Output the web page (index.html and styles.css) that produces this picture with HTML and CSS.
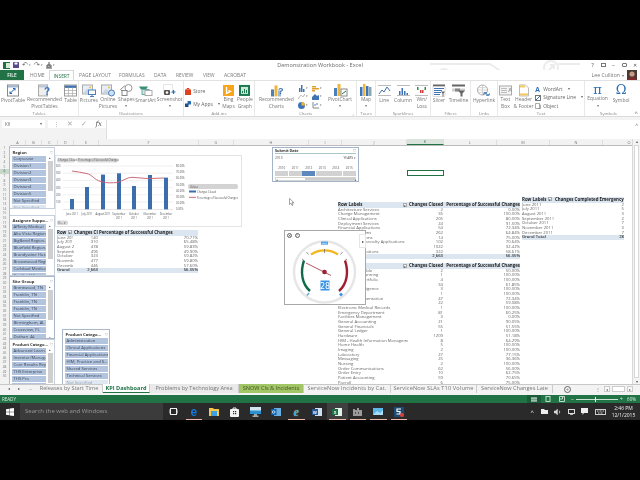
FILE: index.html
```html
<!DOCTYPE html>
<html lang="en">
<head>
<meta charset="utf-8">
<title>Demonstration Workbook - Excel</title>
<link rel="stylesheet" href="styles.css">
</head>
<body>
<div class="app">

<header class="titlebar">
  <svg class="circuit" width="150" height="28" viewBox="0 0 150 28"><g fill="none" stroke="#ececec" stroke-width="2"><path d="M0 4H60L72 12H110"/><circle cx="14" cy="15" r="6"/><path d="M14 15h-4m4 0v-4"/><path d="M30 12H70M60 20H96"/><circle cx="121" cy="8" r="7"/><path d="M118 11l6-6m-4 0h4v4"/><path d="M128 4h22"/></g></svg>
  <div class="qat">
    <svg width="7" height="7" viewBox="0 0 7 7"><rect width="7" height="7" fill="#1e7145"/><rect x="3" y="1" width="4" height="5" fill="#d9ead3"/></svg>
    <svg width="6" height="6" viewBox="0 0 6 6"><rect width="6" height="6" rx=".6" fill="#5b4a8a"/><rect x="1.5" y=".5" width="3" height="2" fill="#fff"/></svg>
    <span class="qat-g">↶</span><span class="qat-d">▾</span><span class="qat-g">↷</span><span class="qat-d">▾</span>
    <svg width="6" height="7" viewBox="0 0 6 7"><path d="M3 0v4M1 3h4v2H1zM0 6h6" stroke="#555" fill="none"/></svg><span class="qat-d">▾</span>
  </div>
  <div class="doc-title">Demonstration Workbook - Excel</div>
  <div class="winctl"><span>?</span><span class="ctl-box"></span><span>–</span><span class="ctl-box ctl-box2"></span><span class="ctl-x">✕</span></div>
</header>

<nav class="tabs">
  <span class="tab tab-file">FILE</span>
  <span class="tab">HOME</span>
  <span class="tab tab-on">INSERT</span>
  <span class="tab">PAGE LAYOUT</span>
  <span class="tab">FORMULAS</span>
  <span class="tab">DATA</span>
  <span class="tab">REVIEW</span>
  <span class="tab">VIEW</span>
  <span class="tab">ACROBAT</span>
  <div class="user"><span>Lee Culliton</span><span class="user-d">▾</span>
    <svg width="10" height="10" viewBox="0 0 10 10"><rect width="10" height="10" fill="#4a3a34"/><circle cx="5" cy="4" r="2.6" fill="#c99a86"/><path d="M0 10c1-4 9-4 10 0z" fill="#7d2d2d"/></svg></div>
</nav>

<section class="ribbon">
  <div class="grp g-tables"><div class="grp-body">
    <div class="btn"><svg class="ic" width="12" height="12" viewBox="0 0 12 12"><rect x=".5" y=".5" width="11" height="11" fill="#fff" stroke="#8a8a8a"/><path d="M1 1h10v2H1z" fill="#9db7d8"/><path d="M3 9l5-5M8 4H6m2 0v2M3 9h2M3 9V7" stroke="#1e5aa8" fill="none"/></svg><span>PivotTable</span></div>
    <div class="btn"><svg class="ic" width="13" height="12" viewBox="0 0 13 12"><rect x=".5" y=".5" width="9" height="11" fill="#eee" stroke="#aaa"/><path d="M1 1h8v2H1z" fill="#b9c7d8"/><text x="6" y="11" class="ic-q">?</text></svg><span>Recommended<br>PivotTables</span></div>
    <div class="btn"><svg class="ic" width="13" height="12" viewBox="0 0 13 12"><rect x=".5" y=".5" width="12" height="11" fill="#fff" stroke="#999"/><path d="M1 1h11v2.400H1z" fill="#3f73b5"/><path d="M4.500 3v9M8.500 3v9M1 6h11M1 9h11" stroke="#aaa" stroke-width=".7"/></svg><span>Table</span></div>
  </div><div class="grp-name">Tables</div></div>

  <div class="grp g-illus"><div class="grp-body">
    <div class="btn"><svg class="ic" width="14" height="12" viewBox="0 0 14 12"><rect x=".5" y=".5" width="10" height="9" fill="#e8eef6" stroke="#aaa"/><path d="M1 9l4-5 4 5z" fill="#c8d4e4"/><circle cx="8" cy="3" r="1" fill="#f1c232"/><rect x="6.500" y="5.500" width="7" height="4.500" fill="#fff" stroke="#4a80bd"/><path d="M10 10v2M8 12h4" stroke="#4a80bd"/></svg><span>Pictures</span></div>
    <div class="btn"><svg class="ic" width="14" height="12" viewBox="0 0 14 12"><rect x=".5" y=".5" width="10" height="9" fill="#e8eef6" stroke="#aaa"/><path d="M1 9l4-5 4 5z" fill="#c8d4e4"/><circle cx="8" cy="3" r="1" fill="#f1c232"/><circle cx="10.500" cy="8.500" r="3" fill="#cfe0f2" stroke="#4a80bd"/></svg><span>Online<br>Pictures</span></div>
    <div class="btn"><svg class="ic" width="13" height="12" viewBox="0 0 13 12"><path d="M4.500 2l4 3.500-4 3.500-4-3.500z" fill="#fff" stroke="#888"/><circle cx="8.500" cy="4" r="3.500" fill="#fff" stroke="#999"/><rect x="2" y="6.500" width="5" height="5" fill="#fff" stroke="#888"/></svg><span>Shapes<br><i>▾</i></span></div>
    <div class="btn"><svg class="ic" width="13" height="12" viewBox="0 0 13 12"><path d="M0 2h9l-2 3H2z" fill="#3b8e76"/><rect x="3" y="5" width="7" height="5" fill="#cfe7df" stroke="#6aa"/><rect x="6" y="6" width="7" height="5" fill="#fff" stroke="#aaa"/></svg><span>SmartArt</span></div>
    <div class="btn"><svg class="ic" width="13" height="12" viewBox="0 0 13 12"><rect x=".5" y=".5" width="9" height="8" fill="#fff" stroke="#ccc" stroke-dasharray="1 1"/><rect x="1" y="6" width="6" height="5" rx="1" fill="#555"/><circle cx="4" cy="8.500" r="1.300" fill="#fff"/><path d="M10.500 6v4M8.500 8h4" stroke="#2a6fb5" stroke-width="1.200"/></svg><span>Screenshot<br><i>▾</i></span></div>
  </div><div class="grp-name">Illustrations</div></div>

  <div class="grp g-addins"><div class="grp-body">
    <div class="addin-list">
      <div class="addin"><svg width="6" height="7" viewBox="0 0 6 7"><rect y="1.500" width="6" height="5.500" fill="#e2401e"/><path d="M2 2V.5h2V2" stroke="#e2401e" fill="none"/></svg><span>Store</span></div>
      <div class="addin"><svg width="6" height="6" viewBox="0 0 6 6"><rect x="2.500" width="3.500" height="3.500" fill="#2a6fb5"/><rect y="2.500" width="3.500" height="3.500" fill="#1d4f8a"/></svg><span>My Apps</span><i>▾</i></div>
    </div>
    <div class="btn"><svg class="ic" width="11" height="11" viewBox="0 0 11 11"><rect width="11" height="11" fill="#f9a51a"/><path d="M3.500 2v6.500l4-2-2-1" stroke="#fff" stroke-width="1.300" fill="none"/></svg><span>Bing<br>Maps</span></div>
    <div class="btn"><svg class="ic" width="11" height="11" viewBox="0 0 11 11"><rect width="11" height="11" fill="#1d7a50"/><rect x="2" y="2" width="7" height="7" fill="#cde6da"/><path d="M3.500 8V6M5.500 8V4M7.500 8V5" stroke="#1d7a50"/></svg><span>People<br>Graph</span></div>
  </div><div class="grp-name">Add-ins</div></div>

  <div class="grp g-charts"><div class="grp-body">
    <div class="btn"><svg class="ic" width="13" height="12" viewBox="0 0 13 12"><rect x="1" y="5" width="3" height="7" fill="#4a80bd"/><rect x="4.500" y="1" width="3" height="11" fill="#f0b63a"/><rect x="8" y="6" width="3" height="6" fill="#9db7d8"/><text x="8" y="10" class="ic-q2">?</text></svg><span>Recommended<br>Charts</span></div>
    <div class="chart-mini">
      <div><svg width="7" height="7" viewBox="0 0 7 7"><path d="M1 7V3h1.500v4zM3 7V0h1.500v7zM5 7V4h1.500v3z" fill="#3f73b5"/></svg><i>▾</i><svg width="7" height="7" viewBox="0 0 7 7"><path d="M0 1h4v1.500H0zM0 3h7v1.500H0zM0 5h3v1.500H0z" fill="#e0a030"/></svg><i>▾</i></div>
      <div><svg width="7" height="7" viewBox="0 0 7 7"><path d="M0 6l3-4 2 2 2-3" stroke="#999" fill="none" stroke-dasharray="1 .5"/></svg><i>▾</i><svg width="7" height="7" viewBox="0 0 7 7"><path d="M0 7V4l3-3 2 2 2-1v5z" fill="#3f73b5"/></svg><i>▾</i></div>
      <div><svg width="7" height="7" viewBox="0 0 7 7"><circle cx="3.500" cy="3.500" r="3.500" fill="#3f73b5"/><path d="M3.500 3.500V0A3.500 3.500 0 0 1 7 3.500z" fill="#f0b63a"/></svg><i>▾</i><svg width="7" height="7" viewBox="0 0 7 7"><path d="M1 0v6h6" stroke="#888" fill="none"/><circle cx="3" cy="3" r=".8" fill="#3f73b5"/><circle cx="5" cy="2" r=".8" fill="#3f73b5"/></svg><i>▾</i></div>
    </div>
    <div class="btn"><svg class="ic" width="13" height="12" viewBox="0 0 13 12"><rect x="0" y="4" width="3" height="8" fill="#4a80bd"/><rect x="3.500" y="0" width="3" height="12" fill="#f0b63a"/><rect x="7" y="5" width="6" height="7" fill="#fff" stroke="#888"/><path d="M8 10l4-3" stroke="#1d7a50"/></svg><span>PivotChart<br><i>▾</i></span></div>
  </div><div class="grp-name">Charts<em class="launcher">⌟</em></div></div>

  <div class="grp g-tours"><div class="grp-body">
    <div class="btn"><svg class="ic" width="12" height="12" viewBox="0 0 12 12"><rect x="0" y="3" width="2.500" height="9" fill="#3f73b5"/><rect x="3" y="0" width="2.500" height="12" fill="#f0b63a"/><rect x="6" y="2" width="2.500" height="10" fill="#3f73b5"/><rect x="9" y="3" width="2.500" height="9" fill="#8aa"/></svg><span>Map<br><i>▾</i></span></div>
  </div><div class="grp-name">Tours</div></div>

  <div class="grp g-spark"><div class="grp-body">
    <div class="btn"><svg class="ic" width="13" height="11" viewBox="0 0 13 11"><path d="M0 .5h13M0 10.500h13" stroke="#bbb"/><path d="M1 9l3-4 2 2 3-5 3 4" stroke="#3f73b5" fill="none"/></svg><span>Line</span></div>
    <div class="btn"><svg class="ic" width="13" height="11" viewBox="0 0 13 11"><path d="M0 .5h13M0 10.500h13" stroke="#bbb"/><path d="M2 10V6h1.500v4zM4.500 10V3H6v7zM7 10V6h1.500v4zM9.500 10V8H11v2z" fill="#3f73b5"/></svg><span>Column</span></div>
    <div class="btn"><svg class="ic" width="13" height="11" viewBox="0 0 13 11"><path d="M0 .5h13M0 10.500h13" stroke="#bbb"/><path d="M2 2h1.500v3H2zM9.500 2H11v3H9.500z" fill="#2d8a50"/><path d="M5 5h1.500v3H5zM7 5h1.500v3H7z" fill="#d43b3b"/></svg><span>Win/<br>Loss</span></div>
  </div><div class="grp-name">Sparklines</div></div>

  <div class="grp g-filters"><div class="grp-body">
    <div class="btn"><svg class="ic" width="12" height="12" viewBox="0 0 12 12"><rect width="12" height="2" fill="#666"/><rect y="2" width="12" height="10" fill="#fff" stroke="#bbb" stroke-width=".5"/><path d="M1 4h10M1 6h8M1 8h7M1 10h6" stroke="#3f73b5" stroke-width="1.200"/><path d="M8 7h4l-1.500 2v3h-1V9z" fill="#666"/></svg><span>Slicer</span></div>
    <div class="btn"><svg class="ic" width="13" height="12" viewBox="0 0 13 12"><rect width="13" height="2" fill="#666"/><path d="M0 4h13v3H0z" fill="#cfcfcf"/><path d="M3 4h5v3H3z" fill="#888"/><path d="M6 6h7l-2.500 3v3h-2V9z" fill="#666"/></svg><span>Timeline</span></div>
  </div><div class="grp-name">Filters</div></div>

  <div class="grp g-links"><div class="grp-body">
    <div class="btn"><svg class="ic" width="13" height="12" viewBox="0 0 13 12"><circle cx="5.500" cy="5.500" r="5" fill="#fff" stroke="#aaa"/><path d="M.5 5.500h10M5.500.5v10M2 2.500c2 1 5 1 7 0M2 8.500c2-1 5-1 7 0" stroke="#bbb" stroke-width=".6" fill="none"/><path d="M7 8.500h3M9 10.500h3.500M6.500 10c0-2 2-1.500 3-1.500M12.500 9c0 2-2 1.500-3 1.500" stroke="#2a6fb5" fill="none"/></svg><span>Hyperlink</span></div>
  </div><div class="grp-name">Links</div></div>

  <div class="grp g-text"><div class="grp-body">
    <div class="btn"><svg class="ic" width="13" height="12" viewBox="0 0 13 12"><rect x=".5" y="1.500" width="12" height="9" fill="#f4f4f4" stroke="#aaa"/><path d="M2 4h6M2 6h6M2 8h6" stroke="#bbb"/><text x="9" y="8" class="ic-a">A</text></svg><span>Text<br>Box</span></div>
    <div class="btn"><svg class="ic" width="10" height="12" viewBox="0 0 10 12"><path d="M.5.500h6l3 3v8h-9z" fill="#fff" stroke="#bbb"/><path d="M1 1h5v2H1z" fill="#f4c95d"/><path d="M1 9h8v2H1z" fill="#f4c95d"/></svg><span>Header<br>&amp; Footer</span></div>
    <div class="text-list">
      <div><svg width="6" height="6" viewBox="0 0 6 6"><text x="0" y="6" class="ic-wa">A</text></svg><span>WordArt</span><i>▾</i></div>
      <div><svg width="6" height="6" viewBox="0 0 6 6"><rect x=".5" y=".5" width="5" height="5" fill="#fff" stroke="#777"/><path d="M1 5l4-4" stroke="#2a6fb5"/></svg><span>Signature Line</span><i>▾</i></div>
      <div><svg width="6" height="6" viewBox="0 0 6 6"><path d="M.5.500h4v5h-4zM4.500 2h1v3.500h-2" fill="#fff" stroke="#888" stroke-width=".7"/></svg><span>Object</span></div>
    </div>
  </div><div class="grp-name">Text</div></div>

  <div class="grp g-sym"><div class="grp-body">
    <div class="btn"><span class="glyph">π</span><span>Equation<br><i>▾</i></span></div>
    <div class="btn"><span class="glyph">Ω</span><span>Symbol</span></div>
  </div><div class="grp-name">Symbols</div></div>
  <div class="collapse">^</div>
</section>

<section class="fbar">
  <div class="namebox"><span>K6</span><i>▾</i></div>
  <div class="fbtns"><span class="fb-dots">⋮</span><span>✕</span><span>✓</span><span class="fb-fx">fx</span></div>
  <div class="fbox"><span class="fb-up">^</span></div>
</section>

<section class="sheetwrap">
  <div class="sheet">
    <div class="corner"></div>
    <div class="cols">
      <span class="c1">A</span><span class="c1">B</span><span class="c1">C</span><span class="c1">D</span><span class="c2">E</span><span class="c3">F</span><span class="c4">G</span><span class="c5">H</span><span class="c6">I</span><span class="c9">J</span><span class="c7 col-on">K</span><span class="c8">L</span><span class="c8">M</span><span class="c8">N</span><span class="c8">O</span>
    </div>
    <div class="rows">
      <span>1</span><span>2</span><span>3</span><span>4</span><span>5</span><span class="row-on">6</span><span>7</span><span>8</span><span>9</span><span>10</span><span>11</span><span>12</span><span>13</span><span>14</span><span>15</span><span>16</span><span>17</span><span>18</span><span>19</span><span>20</span><span>21</span><span>22</span><span>23</span><span>24</span><span>25</span><span>26</span><span>27</span><span>28</span><span>29</span><span>30</span><span>31</span><span>32</span><span>33</span><span>34</span><span>35</span><span>36</span><span>37</span><span>38</span><span>39</span><span>40</span><span>41</span><span>42</span><span>43</span><span>44</span><span>45</span><span>46</span><span>47</span><span>48</span><span>49</span><span>50</span>
    </div>

    <div class="canvas">
      <div class="selcell"></div>

      <div class="slicer s-region">
        <div class="sl-head"><b>Region</b><span>⛉</span></div>
        <div class="sl-body"><div class="sl-items"><div>Corporate</div><div>Division1</div><div>Division2</div><div>Division3</div><div>Division4</div><div>Division5</div><div>Not Specified</div><div class="dim">Not Specified</div></div>
        <div class="sl-scroll"><i>▴</i><u></u><i>▾</i></div></div>
      </div>
      <div class="slicer s-assignee">
        <div class="sl-head"><b>Assignee Suppo...</b><span>⛉</span></div>
        <div class="sl-body"><div class="sl-items"><div>Affinity Medical</div><div>Alta Vista Region</div><div>BigBend Region...</div><div>Bluefield Region...</div><div>Brandywine Hos...</div><div>Brownwood Regi...</div><div>Carlsbad Medical</div><div>Cardinal Hinman</div></div>
        <div class="sl-scroll"><i>▴</i><u></u><i>▾</i></div></div>
      </div>
      <div class="slicer s-site">
        <div class="sl-head"><b>Site Group</b><span>⛉</span></div>
        <div class="sl-body"><div class="sl-items"><div>Brentwood, TN</div><div>Franklin, TN</div><div>Franklin, TN</div><div>Franklin, TN</div><div>Not Specified</div><div>Birmingham, AL</div><div>Crossview, FL</div><div>Dothan, AL</div></div>
        <div class="sl-scroll"><i>▴</i><u></u><i>▾</i></div></div>
      </div>
      <div class="slicer s-prod1">
        <div class="sl-head"><b>Product Catego...</b><span>⛉</span></div>
        <div class="sl-body"><div class="sl-items"><div>Advanced Learn...</div><div>Inventor/Manag...</div><div>Core Results Rep...</div><div>THS Enterprise</div><div>THS Pro</div><div>Clinical Control</div></div>
        <div class="sl-scroll"><i>▴</i><u></u><i>▾</i></div></div>
      </div>
      <div class="slicer s-prod2">
        <div class="sl-head"><b>Product Catego...</b><span>⛉</span></div>
        <div class="sl-items"><div>Administration</div><div>Clinical Applications</div><div>Financial Applications</div><div>HIM, Practice and S...</div><div>Shared Services</div><div>Technical Services</div><div class="dim">Not Specified</div></div>
      </div>

      <svg class="chart" width="187" height="72" viewBox="0 0 187 72">
        <rect x=".5" y=".5" width="186" height="71" fill="#fff" stroke="#e4e4e4"/>
        <g class="fieldbtn"><rect x="2" y="3" width="18" height="4.500" rx="1.500"/><rect x="22" y="3" width="41" height="4.500" rx="1.500"/><text x="3" y="6.300">Changes Closed</text><text x="23" y="6.300">Percentage of Successful Changes</text></g>
        <g stroke="#e6e6e6" stroke-width=".6"><path d="M8 11h110M8 18.200h110M8 25.400h110M8 32.600h110M8 39.800h110M8 47h110"/></g>
        <g class="axis"><text x="1" y="12">600</text><text x="1" y="19.200">500</text><text x="1" y="26.400">400</text><text x="1" y="33.600">300</text><text x="1" y="40.800">200</text><text x="1" y="48">100</text>
        <text x="121" y="12">80.00%</text><text x="121" y="18.200">70.00%</text><text x="121" y="24.400">60.00%</text><text x="121" y="30.600">50.00%</text><text x="121" y="36.800">40.00%</text><text x="121" y="43">30.00%</text><text x="121" y="49.200">20.00%</text><text x="121" y="55">0.00%</text></g>
        <g fill="#3b6eae"><rect x="15" y="44" width="4" height="10.500"/><rect x="30" y="32" width="4" height="22.500"/><rect x="46" y="19.600" width="4" height="35"/><rect x="62" y="18.300" width="4" height="36.200"/><rect x="77" y="31" width="4" height="23.500"/><rect x="93" y="20" width="4" height="34.500"/><rect x="109" y="22.600" width="4" height="32"/></g>
        <path d="M8 54.500h110" stroke="#ccc" stroke-width=".5"/>
        <path d="M17 16c5 .7 10 1.500 15 2.600s7 6 14 8 11 1 16 1c6-1.600 10-5.300 15-5.300l16 1.300 16-.6" fill="none" stroke="#c75b6d" stroke-width=".9"/>
        <g class="axis cats"><text x="17" y="59.500">June 2011</text><text x="32" y="59.500">July 2011</text><text x="48" y="59.500">August 2011</text><text x="64" y="59.500">September</text><text x="64" y="63.500">2011</text><text x="79" y="59.500">October</text><text x="79" y="63.500">2011</text><text x="95" y="59.500">November</text><text x="95" y="63.500">2011</text><text x="111" y="59.500">December</text><text x="111" y="63.500">2011</text></g>
        <rect x="133" y="29" width="50" height="5" rx="2" fill="#d3d3d3"/><text class="axis" x="135" y="32.600">Values</text>
        <rect x="134" y="35.500" width="7" height="2" fill="#3b6eae"/><text class="axis" x="142" y="38">Changes Closed</text>
        <rect x="134" y="41.800" width="7" height="1.200" fill="#d9808e"/><text class="axis" x="142" y="44">Percentage of Successful Changes</text>
        <rect x="2" y="65.500" width="11" height="4.500" rx="1.500" fill="#d9d9d9"/><text class="axis" x="3" y="69">Ye... ▾</text>
      </svg>

      <table class="pv p1">
        <tr class="hd"><th>Row <i class="fbtn">▾</i></th><th>Changes Cl</th><th>Percentage of Successful Changes</th></tr>
        <tr><td>June 20!</td><td>140</td><td>70.71%</td></tr>
        <tr><td>July 20!!</td><td>310</td><td>65.48%</td></tr>
        <tr><td>August 2</td><td>478</td><td>59.83%</td></tr>
        <tr><td>Septemb</td><td>496</td><td>49.90%</td></tr>
        <tr><td>October</td><td>323</td><td>59.82%</td></tr>
        <tr><td>Novemb</td><td>477</td><td>59.80%</td></tr>
        <tr><td>Decemb</td><td>446</td><td>57.60%</td></tr>
        <tr class="tot"><td>Grand</td><td>2,663</td><td>56.35%</td></tr>
      </table>

      <div class="timeline">
        <div class="tl-head"><b>Submit Date</b><span>⛉</span></div>
        <div class="tl-sub"><span>2013</span><span>YEARS ▾</span></div>
        <div class="tl-years"><span>2010</span><span>2011</span><span>2012</span><span>2013</span><span>2014</span><span>2015</span></div>
        <div class="tl-bars"><i></i><i></i><i class="on"></i><i></i><i></i><i></i></div>
        <div class="tl-scroll"><i>◂</i><u></u><i>▸</i></div>
      </div>

      <svg class="cursor" width="6" height="8" viewBox="0 0 6 8"><path d="M.5.500v6l1.500-1.300 1 2.300 1-.5-1-2.300h2z" fill="#fff" stroke="#666" stroke-width=".6"/></svg>

      <table class="pv p2">
        <tr class="hd"><th><i class="fbtn">▾</i>Row Labels</th><th>Changes Closed</th><th>Percentage of Successful Changes</th></tr>
        <tr><td>Architecture Services</td><td>2</td><td>0.00%</td></tr>
        <tr><td>Change Management</td><td>35</td><td>100.00%</td></tr>
        <tr><td>Clinical Applications</td><td>205</td><td>80.00%</td></tr>
        <tr><td>Deployment Services</td><td>24</td><td>91.50%</td></tr>
        <tr><td>Financial Applications</td><td>54</td><td>72.34%</td></tr>
        <tr><td>Hospital Systems</td><td>262</td><td>64.84%</td></tr>
        <tr><td>Interface Systems</td><td>14</td><td>75.00%</td></tr>
        <tr><td>Information Specialty Applications</td><td>102</td><td>70.64%</td></tr>
        <tr><td>Service Desks</td><td>1022</td><td>32.42%</td></tr>
        <tr><td>Telecommunications</td><td>322</td><td>58.61%</td></tr>
        <tr class="tot"><td>Grand Total</td><td>2,663</td><td>56.35%</td></tr>
      </table>

      <table class="pv p3">
        <tr class="hd"><th><i class="fbtn">▾</i>Row Labels</th><th>Changes Closed</th><th>Percentage of Successful Changes</th></tr>
        <tr><td>Accounts Payable</td><td>2</td><td>50.00%</td></tr>
        <tr><td>Admissions Planning</td><td>1</td><td>100.00%</td></tr>
        <tr><td>Blood Bank Portfolio</td><td>4</td><td>100.00%</td></tr>
        <tr><td>Clinical</td><td>34</td><td>61.85%</td></tr>
        <tr><td>Business Intelligence</td><td>3</td><td>100.00%</td></tr>
        <tr><td>Coding</td><td>1</td><td>100.00%</td></tr>
        <tr><td>Clinical Documentation</td><td>47</td><td>72.34%</td></tr>
        <tr><td>ED</td><td>22</td><td>59.08%</td></tr>
        <tr><td>Electronic Medical Records</td><td>1</td><td>100.00%</td></tr>
        <tr><td>Emergency Department</td><td>81</td><td>60.25%</td></tr>
        <tr><td>Facilities Management</td><td>3</td><td>0.00%</td></tr>
        <tr><td>General Accounting</td><td>21</td><td>90.05%</td></tr>
        <tr><td>General Financials</td><td>55</td><td>51.55%</td></tr>
        <tr><td>General Ledger</td><td>1</td><td>100.00%</td></tr>
        <tr><td>Hardware</td><td>1209</td><td>51.18%</td></tr>
        <tr><td>HIM - Health Information Management</td><td>8</td><td>64.29%</td></tr>
        <tr><td>Home Health</td><td>5</td><td>100.00%</td></tr>
        <tr><td>Imaging</td><td>2</td><td>100.00%</td></tr>
        <tr><td>Laboratory</td><td>27</td><td>77.15%</td></tr>
        <tr><td>Messaging</td><td>25</td><td>36.36%</td></tr>
        <tr><td>Nursing</td><td>2</td><td>100.00%</td></tr>
        <tr><td>Order Communications</td><td>62</td><td>56.00%</td></tr>
        <tr><td>Order Entry</td><td>10</td><td>62.75%</td></tr>
        <tr><td>Patient Accounting</td><td>59</td><td>70.65%</td></tr>
        <tr><td>Payroll</td><td>6</td><td>75.00%</td></tr>
      </table>

      <table class="pv p4">
        <tr class="hd"><th>Row Labels <i class="fbtn">▾</i></th><th>Changes Completed Emergency</th></tr>
        <tr><td>June 2011</td><td>2</td></tr>
        <tr><td>July 2011</td><td>5</td></tr>
        <tr><td>August 2011</td><td>3</td></tr>
        <tr><td>September 2011</td><td>2</td></tr>
        <tr><td>October 2011</td><td>7</td></tr>
        <tr><td>November 2011</td><td>3</td></tr>
        <tr><td>December 2011</td><td>7</td></tr>
        <tr class="tot"><td>Grand Total</td><td>28</td></tr>
      </table>

      <div class="gauge">
        <div class="g-btns"><i>✕</i><i>?</i></div>
        <div class="g-flap">▸</div>
        <svg class="g-dial" width="80" height="74" viewBox="0 0 80 74">
          <circle cx="39.500" cy="41" r="30.500" fill="#fff" stroke="#e6e6e6" stroke-width="2.500"/>
          <path d="M26 23.500C34 18 45 18 53 23.500" fill="none" stroke="#f2b61f" stroke-width="2.200"/>
          <path d="M19 29.500C15 41 17 53 25 60" fill="none" stroke="#0f6b47" stroke-width="2.400"/>
          <path d="M60 29.500C64 41 62 53 54 60" fill="none" stroke="#a11f2e" stroke-width="2.400"/>
          <path d="M39.500 18v4M21.500 21l2 2.500M57.500 21l-2 2.500M17 28l2 1.500M62 28l-2 1.500" stroke="#666" stroke-width=".7"/>
          <path d="M21 32L46 44.500" stroke="#9c2b45" stroke-width=".8"/>
          <circle cx="39.500" cy="41" r="2.300" fill="#9c2030"/>
          <rect x="36" y="10.500" width="7" height="3.200" fill="#58a4ea"/><text class="g-mini" x="39.500" y="13">50%</text>
          <rect x="35.500" y="49.500" width="9" height="10" fill="#3c94e6"/><text class="g-num" x="40" y="58">28</text>
          <path d="M24 62l-2 2.500" stroke="#58a4ea" stroke-width="1.400"/>
          <path d="M56 61.500l2 2 -2 2-2-2z" fill="#3c94e6"/>
        </svg>
      </div>
    </div>
  </div>
  <div class="vscroll"><i>▴</i><u></u><i>▾</i></div>
</section>

<nav class="sheettabs">
  <div class="st-nav"><span>◂</span><span>▸</span><span>…</span></div>
  <span class="st st-a">Releases by Start Time</span>
  <span class="st st-on">KPI Dashboard</span>
  <span class="st st-grey">Problems by Technology Area</span>
  <span class="st st-green">SNOW CIs &amp; Incidents</span>
  <span class="st st-b">ServiceNow Incidents by Cat.</span>
  <span class="st st-b">ServiceNow SLAs T10 Volume</span>
  <span class="st st-c">ServiceNow Changes Late</span>
  <span class="st-add">+</span>
  <div class="hscroll"><span class="st-dots">⋮</span><i>◂</i><u></u><i>▸</i></div>
</nav>

<footer class="status">
  <span class="ready">READY</span>
  <div class="views">
    <span class="v-on"><svg width="6" height="5" viewBox="0 0 6 5"><path d="M0 0h6v5H0zM0 1.700h6M0 3.300h6M2 0v5M4 0v5" fill="none" stroke="#e8f2ec" stroke-width=".6"/></svg></span>
    <span><svg width="6" height="6" viewBox="0 0 6 6"><rect x="1" y=".5" width="4" height="5" fill="none" stroke="#e8f2ec" stroke-width=".8"/></svg></span>
    <span><svg width="6" height="6" viewBox="0 0 6 6"><path d="M.5.500h5v5h-5zM.5 3h3V.5" fill="none" stroke="#e8f2ec" stroke-width=".8"/></svg></span>
  </div>
  <div class="zoom"><span>–</span><div class="ztrack"><i></i></div><span>+</span></div>
  <span class="zpct">60%</span>
</footer>

<footer class="taskbar">
  <svg class="start" width="8" height="8" viewBox="0 0 8 8"><path d="M0 1.200l3.400-.5v3.100H0zM3.800.6L8 0v3.800H3.800zM0 4.200h3.400v3.100L0 6.800zM3.800 4.200H8V8l-4.200-.6z" fill="#fff"/></svg>
  <div class="search">Search the web and Windows</div>
  <div class="tb-icons">
    <span class="ti"><svg width="9" height="7" viewBox="0 0 9 7"><rect x="1.500" y=".5" width="6" height="6" fill="none" stroke="#eee"/><path d="M0 1.500v4M9 1.500v4" stroke="#eee"/></svg></span>
    <span class="ti open"><span class="ti-e">e</span></span>
    <span class="ti"><svg width="10" height="9" viewBox="0 0 10 9"><path d="M0 1h4l1 1h5v7H0z" fill="#f5c84b"/><rect x="2" y="4" width="6" height="5" fill="#3fa0e0"/></svg></span>
    <span class="ti"><svg width="9" height="10" viewBox="0 0 9 10"><rect y="2" width="9" height="8" rx="1" fill="#f4f4f4"/><path d="M3 2V1h3v1" stroke="#f4f4f4" fill="none"/><path d="M3 4h1.200v1.200H3zM5 4h1.200v1.200H5zM3 6h1.200v1.200H3zM5 6h1.200v1.200H5z" fill="#333"/></svg></span>
    <span class="ti"><svg width="11" height="10" viewBox="0 0 11 10"><rect width="11" height="7" fill="#cfe4ef"/><rect y="3.500" width="11" height="3.500" fill="#2c8fd0"/><path d="M4 7h3v1.500H4zM2.500 8.500h6V10h-6z" fill="#9aa"/></svg></span>
    <span class="ti"><svg width="10" height="8" viewBox="0 0 10 8"><rect x="3" y="0" width="7" height="8" fill="#6aaee0"/><rect x="0" y="1" width="5.500" height="6" fill="#0f62ae"/><circle cx="2.700" cy="4" r="1.300" fill="none" stroke="#fff" stroke-width=".7"/></svg></span>
    <span class="ti open"><span class="ti-ie">e</span></span>
    <span class="ti"><svg width="10" height="8" viewBox="0 0 10 8"><rect x="3" width="7" height="8" fill="#cfdff0"/><rect y="1" width="6" height="6" fill="#2b5797"/><text x="3" y="5.800" class="ti-l">W</text></svg></span>
    <span class="ti active open"><svg width="10" height="8" viewBox="0 0 10 8"><rect x="3" width="7" height="8" fill="#e4f3ea"/><rect y="1" width="6" height="6" fill="#1e7145"/><text x="3" y="5.800" class="ti-l">X</text></svg></span>
    <span class="ti open"><svg width="9" height="8" viewBox="0 0 9 8"><path d="M0 1h2v1h2V0h2v2h3v6H0z" fill="#9a9a9a"/><path d="M2 4h1v2H2zM5 4h1v2H5z" fill="#555"/></svg></span>
    <span class="ti open"><svg width="10" height="7" viewBox="0 0 10 7"><rect width="10" height="7" fill="#5cb6e8"/><path d="M0 7l4-4 3 2 3-3v5z" fill="#a9dcf6"/></svg></span>
    <span class="ti open"><svg width="10" height="10" viewBox="0 0 10 10"><rect width="10" height="10" fill="#1c4a72"/><path d="M7 2H3v2.500h3V7H2.500" stroke="#fff" fill="none" stroke-width="1.200"/><circle cx="8" cy="8" r="2" fill="#e23b3b"/></svg></span>
  </div>
  <div class="tray">
    <span>^</span>
    <svg width="7" height="5" viewBox="0 0 7 5"><path d="M0 0h3l1 1h3v4H0z" fill="#eee"/></svg>
    <svg width="7" height="6" viewBox="0 0 7 6"><path d="M0 2h1.500L3.500 0v6L1.500 4H0zM5 1.500c1 1 1 2 0 3" fill="#ddd" stroke="#ddd" stroke-width=".4"/></svg>
    <svg width="7" height="6" viewBox="0 0 7 6"><rect x=".5" y=".5" width="6" height="4" fill="none" stroke="#ddd"/><path d="M2 5.700h3" stroke="#ddd"/></svg>
    <svg width="7" height="7" viewBox="0 0 7 7"><path d="M0 0h7v5H3L1.500 7V5H0z" fill="#eee"/></svg>
    <svg width="11" height="6" viewBox="0 0 11 6"><rect x=".5" y=".5" width="10" height="5" fill="none" stroke="#ccc"/><path d="M2 2h7M3 4h5" stroke="#ccc" stroke-dasharray="1 .5"/></svg>
    <div class="clock">2:46 PM<br>12/1/2015</div>
  </div>
</footer>

</div>
</body>
</html>
```

FILE: styles.css
```css
* { box-sizing: border-box; }
html, body { margin: 0; padding: 0; background: #000; overflow: hidden; }
body { width: 640px; height: 480px; padding: 60px 0; font-family: "Open Sans", "Liberation Sans", sans-serif; }
.app { height: 360px; display: flex; flex-direction: column; background: #f3f3f3; color: #666; filter: blur(.32px); overflow: hidden; }
i { font-style: normal; }

/* title bar */
.titlebar { position: relative; height: 10px; flex: none; display: flex; align-items: center; background: #fff; padding-left: 3px; font-size: 5.5px; }
.circuit { position: absolute; left: 430px; top: 0; }
.qat { display: flex; align-items: center; gap: 3px; color: #666; position: relative; }
.qat-g { font-size: 7px; line-height: 8px; }
.qat-d { font-size: 3px; margin-left: -2px; }
.doc-title { position: absolute; left: 0; right: 0; text-align: center; color: #6a6a6a; font-size: 5.6px; }
.winctl { margin-left: auto; display: flex; align-items: center; gap: 5.500px; padding-right: 3px; font-size: 6px; position: relative; color: #555; }
.winctl span { width: 5px; text-align: center; }
.ctl-box { height: 4.500px; border: .7px solid #777; }
.ctl-box2 { border-radius: 1px; }
.ctl-x { font-size: 5px; }

/* tabs */
.tabs { height: 10px; flex: none; display: flex; align-items: center; background: #fff; font-size: 4.900px; position: relative; }
.tab { color: #777; white-space: nowrap; line-height: 10px; flex: none; }
.tab:nth-child(2) { margin-left: 6px; width: 19px; }
.tab:nth-child(4) { width: 40px; }
.tab:nth-child(5) { width: 35px; }
.tab:nth-child(6) { width: 22px; }
.tab:nth-child(7) { width: 27px; }
.tab:nth-child(8) { width: 21px; }
.tab-file { width: 24px; height: 10px; text-align: center; background: #217346; color: #fff; font-weight: 600; }
.tab-on { width: 25px; height: 10px; margin-right: 5px; text-align: center; color: #217346; background: #fff; border: .6px solid #d8d8d8; border-bottom: 0; }
.user { margin-left: auto; display: flex; align-items: center; gap: 2px; padding-right: 3px; color: #777; font-size: 5.200px; }
.user-d { font-size: 3.500px; margin-right: 1px; }

/* ribbon */
.ribbon { height: 37px; flex: none; display: flex; position: relative; background: #fff; border-top: .6px solid #e2e2e2; border-bottom: .8px solid #dcdcdc; font-size: 4.950px; line-height: 6.800px; }
.grp { display: flex; flex-direction: column; border-right: .6px solid #e8e8e8; flex: none; }
.grp-body { flex: 1; display: flex; justify-content: space-around; padding-top: 2.500px; min-height: 0; }
.grp-name { height: 6px; text-align: center; font-size: 4.300px; color: #888; line-height: 7px; position: relative; }
.launcher { position: absolute; right: 2px; font-style: normal; }
.g-tables { width: 79px; }
.g-illus { width: 105px; }
.g-addins { width: 71px; }
.g-charts { width: 102px; }
.g-tours { width: 19px; }
.g-spark { width: 55px; }
.g-filters { width: 40px; }
.g-links { width: 27px; }
.g-text { width: 87px; }
.g-sym { width: 47px; border-right: 0; }
.btn { display: flex; flex-direction: column; align-items: center; text-align: center; white-space: nowrap; color: #777; }
.btn i { font-size: 3.500px; }
.ic { height: 13px; overflow: visible; }
.ic-q { font: 700 10px "Liberation Sans", sans-serif; fill: #3f73b5; }
.ic-q2 { font: 700 9px "Liberation Sans", sans-serif; fill: #3f73b5; }
.ic-a { font: 700 6px "Liberation Sans", sans-serif; fill: #999; }
.ic-wa { font: 700 7px "Liberation Sans", sans-serif; fill: #2a6fb5; }
.addin-list { display: flex; flex-direction: column; gap: 6px; padding-top: 4px; }
.addin, .text-list div { display: flex; align-items: center; gap: 2px; white-space: nowrap; }
.addin i, .text-list i { font-size: 3.500px; margin-left: 3px; }
.chart-mini { display: flex; flex-direction: column; gap: 1.500px; padding-top: 1px; margin: 0 -4px; }
.chart-mini div { display: flex; align-items: center; gap: 1.500px; }
.chart-mini i { font-size: 3px; margin-right: 2px; }
.text-list { display: flex; flex-direction: column; gap: 2px; padding-top: 2px; }
.glyph { height: 13px; font: 13px/12px "DejaVu Serif", serif; color: #2a6fb5; overflow: hidden; }
.collapse { position: absolute; right: 2px; bottom: -1px; font-size: 6px; }

/* formula bar */
.fbar { height: 22px; flex: none; display: flex; padding-top: 2.500px; align-items: flex-start; background: #f3f3f3; }
.namebox { width: 43px; height: 8px; margin-left: 2px; display: flex; justify-content: space-between; padding: 0 3px; background: #fff; font-size: 4.500px; line-height: 8px; }
.namebox i { font-size: 3.500px; }
.fbtns { display: flex; width: 58px; height: 8px; align-items: center; font-size: 6.500px; color: #aaa; background: #fff; margin-left: 3px; justify-content: space-around; padding-left: 8px; }
.fb-dots { margin-left: -6px; color: #999; font-size: 5px; }
.fb-fx { font: italic 7px "DejaVu Serif", serif; color: #555; }
.fbox { flex: 1; height: 19.500px; background: #fff; position: relative; border-left: .6px solid #ddd; }
.fb-up { position: absolute; right: 2px; top: 2px; font-size: 5px; }

/* sheet */
.sheetwrap { flex: 1; display: flex; min-height: 0; background: #fff; }
.sheet { flex: 1; display: grid; grid-template-columns: 10px 1fr; grid-template-rows: 7px 1fr; position: relative; min-width: 0; overflow: hidden; background: #fff; }
.corner { background: #f2f2f2; }
.cols { display: flex; align-items: flex-end; font-size: 3.800px; line-height: 5px; color: #777; background: #f2f2f2; border-bottom: .6px solid #bbb; overflow: hidden; }
.cols span { flex: none; text-align: center; border-right: .3px solid #ddd; }
.c1 { width: 16px; }
.c2 { width: 25px; }
.c3 { width: 100px; }
.c4 { width: 35px; }
.c5 { width: 75px; }
.c6 { width: 33px; }
.c7 { width: 37px; }
.c8 { width: 53px; }
.c9 { width: 65px; }
.cols .col-on { background: #dbe3dd; border-bottom: 1px solid #217346; color: #217346; }
.rows { display: flex; flex-direction: column; background: #f2f2f2; font-size: 3.200px; color: #777; text-align: center; border-right: .4px solid #bbb; }
.rows span { height: 4.670px; line-height: 4.670px; flex: none; }
.rows .row-on { background: #c8d6cc; color: #217346; }
.canvas { position: relative; min-width: 0; overflow: hidden; }

.selcell { position: absolute; left: 397px; top: 23.500px; width: 37px; height: 6px; border: 1px solid #217346; }

.slicer { position: absolute; background: #fff; border: .6px solid #c6d0dc; font-size: 4.200px; overflow: hidden; padding: 1px 1.500px; }
.s-region { left: -1px; top: 1px; width: 46px; height: 62px; }
.s-assignee { left: -1px; top: 69px; width: 46px; height: 61px; }
.s-site { left: -1px; top: 130px; width: 46px; height: 63px; border-color: #a8b6c8; }
.s-prod1 { left: -1px; top: 193px; width: 46px; height: 46px; }
.s-prod2 { left: 52px; top: 183px; width: 48px; height: 56px; border-color: #aab8c8; }
.sl-head { height: 6.500px; display: flex; justify-content: space-between; align-items: center; color: #333; padding-left: 1px; }
.sl-head span { color: #aaa; font-size: 4px; }
.sl-body { display: flex; gap: 1.200px; }
.sl-items { flex: 1; display: flex; flex-direction: column; gap: 1px; min-width: 0; }
.sl-items div { height: 6px; line-height: 6px; padding-left: 2px; background: #b3c5de; color: #3a4656; white-space: nowrap; overflow: hidden; }
.sl-items .dim { background: #dfe7f1; color: #9aa6b4; }
.sl-scroll { width: 5px; height: 56px; display: flex; flex-direction: column; font-size: 3px; text-align: center; line-height: 5px; color: #444; }
.sl-scroll u { flex: none; height: 30px; background: #cfcfcf; }
.sl-scroll i:last-child { margin-top: auto; }

.chart { position: absolute; left: 45px; top: 9px; }
.fieldbtn rect { fill: #d9d9d9; }
.fieldbtn text, .axis text, text.axis { font: 2.600px "Open Sans", sans-serif; fill: #555; }
.cats text { text-anchor: middle; }

.pv { position: absolute; border-collapse: collapse; table-layout: fixed; font-size: 4.200px; color: #666; background: #fff; }
.pv tr { height: 4.670px; }
.pv td, .pv th { padding: 0; line-height: 4.670px; height: 4.670px; white-space: nowrap; overflow: hidden; }
.pv td:not(:first-child), .pv th:not(:first-child) { text-align: right; }
.pv th:first-child { text-align: left; }
.pv .hd { background: #dce6f1; color: #222; font-weight: 600; font-size: 4.400px; height: 5.500px; }
.pv .hd th { height: 5.500px; line-height: 5.500px; }
.pv .tot { background: #dce6f1; color: #333; font-weight: 600; }
.fbtn { display: inline-block; width: 4px; height: 4px; line-height: 4px; font-size: 3px; text-align: center; border: .4px solid #aaa; background: #f4f4f4; font-weight: 400; }
.p1 { left: 47px; top: 84px; width: 141px; }
.p1 td:nth-child(1), .p1 th:nth-child(1) { width: 17px; }
.p1 td:nth-child(2), .p1 th:nth-child(2) { width: 24px; }
.p1 .hd th:nth-child(2) { text-align: left; overflow: visible; }
.p1 .hd th:nth-child(3) { text-align: left; padding-left: 1px; }
.p2, .p3 { left: 328px; width: 182px; }
.p2 { top: 56px; }
.p3 { top: 117px; }
.p2 td:nth-child(1), .p2 th:nth-child(1), .p3 td:nth-child(1), .p3 th:nth-child(1) { width: 70px; }
.p2 td:nth-child(2), .p2 th:nth-child(2), .p3 td:nth-child(2), .p3 th:nth-child(2) { width: 35px; }
.p2 .fbtn, .p3 .fbtn { float: right; margin: .8px 1px 0 0; }
.p4 { left: 512px; top: 51px; width: 102px; }
.p4 td:nth-child(1), .p4 th:nth-child(1) { width: 32px; }
.p4 .hd th:nth-child(2) { text-align: left; padding-left: 1px; }

.timeline { position: absolute; left: 262px; top: 1px; width: 87px; height: 35px; background: #fff; border: .7px solid #a3b4c9; display: flex; flex-direction: column; padding: 0 2px; font-size: 3.800px; color: #555; }
.tl-head { height: 7px; display: flex; justify-content: space-between; align-items: center; border-bottom: .7px solid #a9c6c6; color: #333; }
.tl-head span { color: #a85; font-size: 4px; }
.tl-sub { height: 5px; display: flex; justify-content: space-between; align-items: center; margin-top: 1px; font-size: 3.300px; }
.tl-years { height: 5px; margin-top: 6px; display: flex; justify-content: space-around; font-size: 3px; line-height: 5px; }
.tl-bars { height: 5px; display: flex; gap: .5px; }
.tl-bars i { flex: 1; background: #d2d2d2; }
.tl-bars .on { background: #5c88c0; }
.tl-scroll { height: 4px; margin-top: 1px; display: flex; font-size: 3px; line-height: 4px; border: .4px solid #d4d4d4; }
.tl-scroll i { width: 4px; text-align: center; }
.tl-scroll u { flex: none; margin-left: 27px; width: 50px; border: .4px solid #ccc; background: #fff; }
u { text-decoration: none; display: block; }

.cursor { position: absolute; left: 279px; top: 52px; }

.gauge { position: absolute; left: 274px; top: 84px; width: 82px; height: 75px; background: #fff; border: .8px solid #a8a8a8; }
.g-btns { position: absolute; left: 2px; top: 1.500px; display: flex; gap: 2.500px; }
.g-btns i { width: 5px; height: 5px; border: .5px solid #666; border-radius: 50%; font-size: 3.500px; line-height: 4px; text-align: center; color: #444; }
.g-flap { position: absolute; right: -1px; top: 3px; width: 7px; height: 14px; background: #fff; border: .4px solid #e6e6e6; font-size: 4px; line-height: 14px; text-align: center; color: #333; }
.g-dial { position: absolute; left: 0; top: 0; }
.g-mini { font: 2.500px "Open Sans", sans-serif; fill: #fff; text-anchor: middle; }
.g-num { font: 8px "DejaVu Sans", sans-serif; fill: #fff; text-anchor: middle; }

.vscroll { width: 8px; flex: none; display: flex; flex-direction: column; background: #f3f3f3; border-left: .6px solid #d8d8d8; font-size: 4px; text-align: center; color: #555; }
.vscroll i:last-child { margin-top: auto; }
.vscroll u { flex: 1; margin: 1px; background: #fff; border: .4px solid #d8d8d8; }

/* sheet tabs */
.sheettabs { height: 11px; flex: none; display: flex; align-items: flex-end; background: #f3f3f3; font-size: 5.600px; color: #777; white-space: nowrap; padding-bottom: 2px; border-top: .6px solid #c8c8c8; }
.st-nav { width: 36px; display: flex; justify-content: space-around; font-size: 4px; padding-left: 4px; color: #555; height: 8px; line-height: 8px; }
.st { height: 9.500px; line-height: 9px; border-right: .5px solid #ccc; margin-top: -1px; text-align: center; flex: none; }
.st-a { width: 67px; }
.st-on { width: 47px; background: #fff; color: #217346; font-weight: 700; border-bottom: 1.200px solid #217346; }
.st-grey { width: 89px; background: #e9e9e9; }
.st-green { width: 65px; background: #a2c565; color: #44552a; }
.st-b { width: 87px; letter-spacing: .15px; }
.st-b + .st-b { width: 86px; }
.st-c { width: 76px; }
.st-add { margin-left: 11px; width: 7px; height: 7px; line-height: 6px; border: .6px solid #666; border-radius: 50%; text-align: center; }
.hscroll { margin-left: auto; width: 44px; padding-right: 6px; display: flex; align-items: center; gap: 2px; font-size: 3.500px; height: 8px; }
.st-dots { margin-right: 2px; }
.hscroll i { width: 6px; height: 6px; line-height: 6px; text-align: center; border: .3px solid #ccc; background: #f9f9f9; }
.hscroll u { width: 13px; height: 6px; background: #fff; border: .4px solid #ccc; }

/* status bar */
.status { height: 8px; flex: none; display: flex; align-items: center; background: #217346; color: #dcece2; font-size: 4.500px; padding-left: 2px; }
.views { margin-left: auto; display: flex; }
.views span { width: 14px; height: 8px; display: flex; align-items: center; justify-content: center; }
.views .v-on { background: #1a5c38; }
.zoom { display: flex; align-items: center; gap: 2px; width: 52px; margin-left: 2px; font-size: 5.500px; }
.ztrack { flex: 1; height: .6px; background: #cfe0d5; position: relative; }
.ztrack i { position: absolute; left: 19px; top: -2px; width: 1.200px; height: 5px; background: #f2f7f4; }
.zpct { width: 17px; text-align: center; }

/* taskbar */
.taskbar { height: 17px; flex: none; display: flex; align-items: center; background: #2a2a2a; color: #eee; }
.start { margin-left: 6px; flex: none; }
.search { margin-left: 6px; width: 143px; height: 17px; line-height: 17px; background: #3b3b3b; color: #9a9a9a; font-size: 6px; padding-left: 5px; flex: none; }
.tb-icons { display: flex; }
.ti { width: 20.500px; height: 17px; display: flex; align-items: center; justify-content: center; position: relative; flex: none; }
.ti.open::after { content: ""; position: absolute; left: 2px; right: 2px; bottom: 0; height: .8px; background: #f0b6a8; }
.ti.active { background: #3f3f3f; }
.ti-e { font: 700 12px/12px "Liberation Sans", sans-serif; color: #1277d8; }
.ti-ie { font: italic 700 12px/12px "Liberation Serif", serif; color: #3ca6dc; text-shadow: 0 0 1px #e6c84c; }
.ti-l { font: 700 4px "Liberation Sans", sans-serif; fill: #fff; text-anchor: middle; }
.tray { margin-left: auto; display: flex; align-items: center; gap: 6.500px; padding-right: 4px; font-size: 6px; }
.clock { text-align: center; font-size: 5px; line-height: 6.500px; width: 25px; margin-left: -1px; }
```
